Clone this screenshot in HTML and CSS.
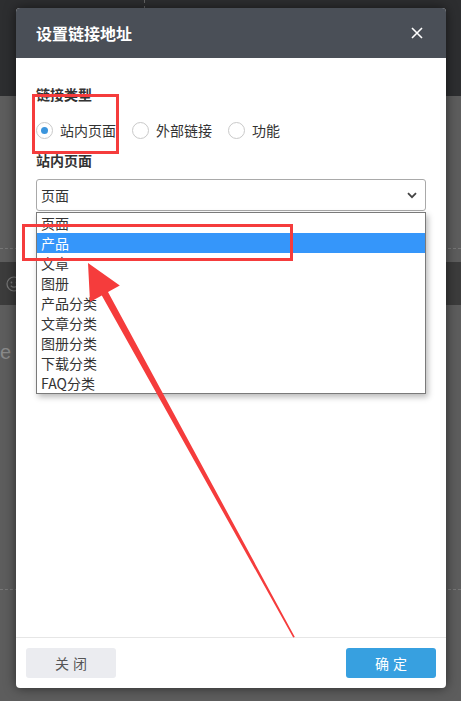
FILE: index.html
```html
<!DOCTYPE html>
<html lang="zh-CN">
<head>
<meta charset="UTF-8" />
<meta name="viewport" content="width=device-width, initial-scale=1.0"/>
<title>设置链接地址</title>
<link rel="stylesheet" href="styles.css">
</head>
<body>

<!-- 背后的编辑页面（被遮罩覆盖） -->
<div class="backdrop">
    <div class="topbar"><span class="divider"></span></div>
    <div class="workspace">
        <div class="ws-row ws-row-first"></div>
        <div class="ws-toolbar">
            <svg class="ws-smile" width="16" height="16" viewBox="0 0 16 16">
                <circle cx="8" cy="8" r="7" fill="none" stroke="#777" stroke-width="1.2"/>
                <circle cx="5.5" cy="6.5" r="0.9" fill="#777"/>
                <circle cx="10.5" cy="6.5" r="0.9" fill="#777"/>
                <path d="M4.8 9.8 Q8 12.6 11.2 9.8" fill="none" stroke="#777" stroke-width="1.2"/>
            </svg>
        </div>
        <div class="ws-text">e</div>
        <div class="ws-row ws-row-last"></div>
    </div>
</div>

<!-- 弹窗 -->
<div class="modal">
    <div class="modal-head">
        <span class="modal-title">设置链接地址</span>
        <svg class="modal-close" width="12" height="12" viewBox="0 0 12 12">
            <path d="M1 1 L11 11 M11 1 L1 11" stroke="#fff" stroke-width="1.6" fill="none"/>
        </svg>
    </div>

    <div class="modal-body">
        <div class="field-label">链接类型</div>
        <div class="radio-row">
            <label class="radio"><span class="radio-dot on"></span>站内页面</label>
            <label class="radio"><span class="radio-dot"></span>外部链接</label>
            <label class="radio"><span class="radio-dot"></span>功能</label>
        </div>

        <div class="field-label select-label">站内页面</div>
        <div class="select-wrap">
            <div class="select-box">
                <span>页面</span>
                <svg width="10" height="7" viewBox="0 0 10 7">
                    <path d="M1 1.2 L5 5.2 L9 1.2" stroke="#444" stroke-width="1.8" fill="none"/>
                </svg>
            </div>
            <ul class="select-list">
                <li>页面</li>
                <li class="active">产品</li>
                <li>文章</li>
                <li>图册</li>
                <li>产品分类</li>
                <li>文章分类</li>
                <li>图册分类</li>
                <li>下载分类</li>
                <li>FAQ分类</li>
            </ul>
        </div>
    </div>

    <div class="modal-foot">
        <button class="btn btn-close">关闭</button>
        <button class="btn btn-ok">确定</button>
    </div>
</div>

<!-- 标注 -->
<div class="mark mark-radio"></div>
<div class="mark mark-option"></div>
<svg class="arrow" width="461" height="701" viewBox="0 0 461 701">
    <polygon fill="#f53c3c" points="88,263 119.8,285.5 108,292 294.8,637 293.2,637.4 101.8,295.4 90,301.9"/>
</svg>

</body>
</html>
```

FILE: styles.css
```css
body {
    margin: 0;
    padding: 0;
    font-family: "Noto Sans CJK SC", "Noto Sans", sans-serif;
    color: #333;
}

/* 背景页面 */
.backdrop {
    width: 461px;
    height: 701px;
    background: #5d5d5d;
    display: flex;
    flex-direction: column;
    overflow: hidden;
}

.topbar {
    height: 96px;
    background: #2d2e30;
    flex-shrink: 0;
}

.topbar .divider {
    display: block;
    margin-left: 144px;
    width: 0;
    height: 9px;
    border-left: 1px dashed #666;
}

.workspace {
    display: flex;
    flex-direction: column;
    flex: 1;
}

.ws-row {
    border-bottom: 1px dashed #777;
}

.ws-row-first {
    height: 152px;
}

.ws-toolbar {
    margin-top: 13px;
    height: 43px;
    background: #3c3c3c;
    display: flex;
    align-items: center;
    padding-left: 6px;
}

.ws-text {
    margin-top: 35px;
    padding-left: 0;
    font-family: "Liberation Sans", sans-serif;
    font-size: 20px;
    line-height: 24px;
    color: #8a8a8a;
}

.ws-row-last {
    height: 225px;
}

/* 弹窗 */
.modal {
    position: absolute;
    top: 8px;
    left: 16px;
    width: 430px;
    height: 680px;
    background: #fff;
    border-radius: 4px;
    box-shadow: 0 0 12px rgba(0, 0, 0, 0.55);
    display: flex;
    flex-direction: column;
}

.modal-head {
    height: 50px;
    flex-shrink: 0;
    background: #4a4f57;
    border-radius: 4px 4px 0 0;
    display: flex;
    align-items: center;
    justify-content: space-between;
    padding: 0 23px 0 20px;
}

.modal-title {
    color: #fff;
    font-size: 16px;
    font-weight: bold;
}

.modal-body {
    flex: 1;
    padding: 26px 20px 0;
}

.field-label {
    font-size: 14px;
    font-weight: bold;
    line-height: 20px;
    color: #333;
}

.radio-row {
    display: flex;
    align-items: center;
    height: 20px;
    margin-top: 16px;
}

.radio {
    display: flex;
    align-items: center;
    gap: 7px;
    margin-right: 16px;
    font-size: 14px;
    line-height: 20px;
    color: #333;
}

.radio-dot {
    width: 17px;
    height: 17px;
    border: 1px solid #c9c9c9;
    border-radius: 50%;
    box-sizing: border-box;
    display: flex;
    align-items: center;
    justify-content: center;
    background: #fff;
}

.radio-dot.on::after {
    content: "";
    width: 7px;
    height: 7px;
    border-radius: 50%;
    background: #3b95dd;
}

.select-label {
    margin-top: 10px;
}

.select-wrap {
    position: relative;
    margin-top: 9px;
}

.select-box {
    height: 32px;
    box-sizing: border-box;
    border: 1px solid #a9a9a9;
    border-radius: 3px;
    padding: 0 8px 0 4px;
    display: flex;
    align-items: center;
    justify-content: space-between;
    font-size: 14px;
    color: #333;
}

.select-list {
    position: absolute;
    top: 33px;
    left: 0;
    right: 0;
    margin: 0;
    padding: 0;
    list-style: none;
    background: #fff;
    border: 1px solid #7a7a7a;
    box-shadow: 2px 3px 6px rgba(0, 0, 0, 0.28);
}

.select-list li {
    font-size: 14px;
    line-height: 20px;
    padding-left: 4px;
    color: #333;
}

.select-list li.active {
    background: #3596fa;
    color: #fff;
}

.modal-foot {
    border-top: 1px solid #e6e6e6;
    padding: 10px;
    display: flex;
    justify-content: space-between;
}

.btn {
    width: 90px;
    height: 30px;
    border: none;
    border-radius: 3px;
    font-family: "Noto Sans CJK SC", sans-serif;
    font-size: 14px;
    letter-spacing: 4px;
    text-indent: 4px;
    padding: 0;
}

.btn-close {
    background: #ebecf0;
    color: #555;
}

.btn-ok {
    background: #37a0e0;
    color: #fff;
}

/* 红色标注 */
.mark {
    position: absolute;
    border: 3px solid #f53c3c;
    box-sizing: border-box;
}

.mark-radio {
    left: 32px;
    top: 94px;
    width: 87px;
    height: 60px;
}

.mark-option {
    left: 22px;
    top: 224px;
    width: 271px;
    height: 37px;
}

.arrow {
    position: absolute;
    top: 0;
    left: 0;
    pointer-events: none;
}
```
